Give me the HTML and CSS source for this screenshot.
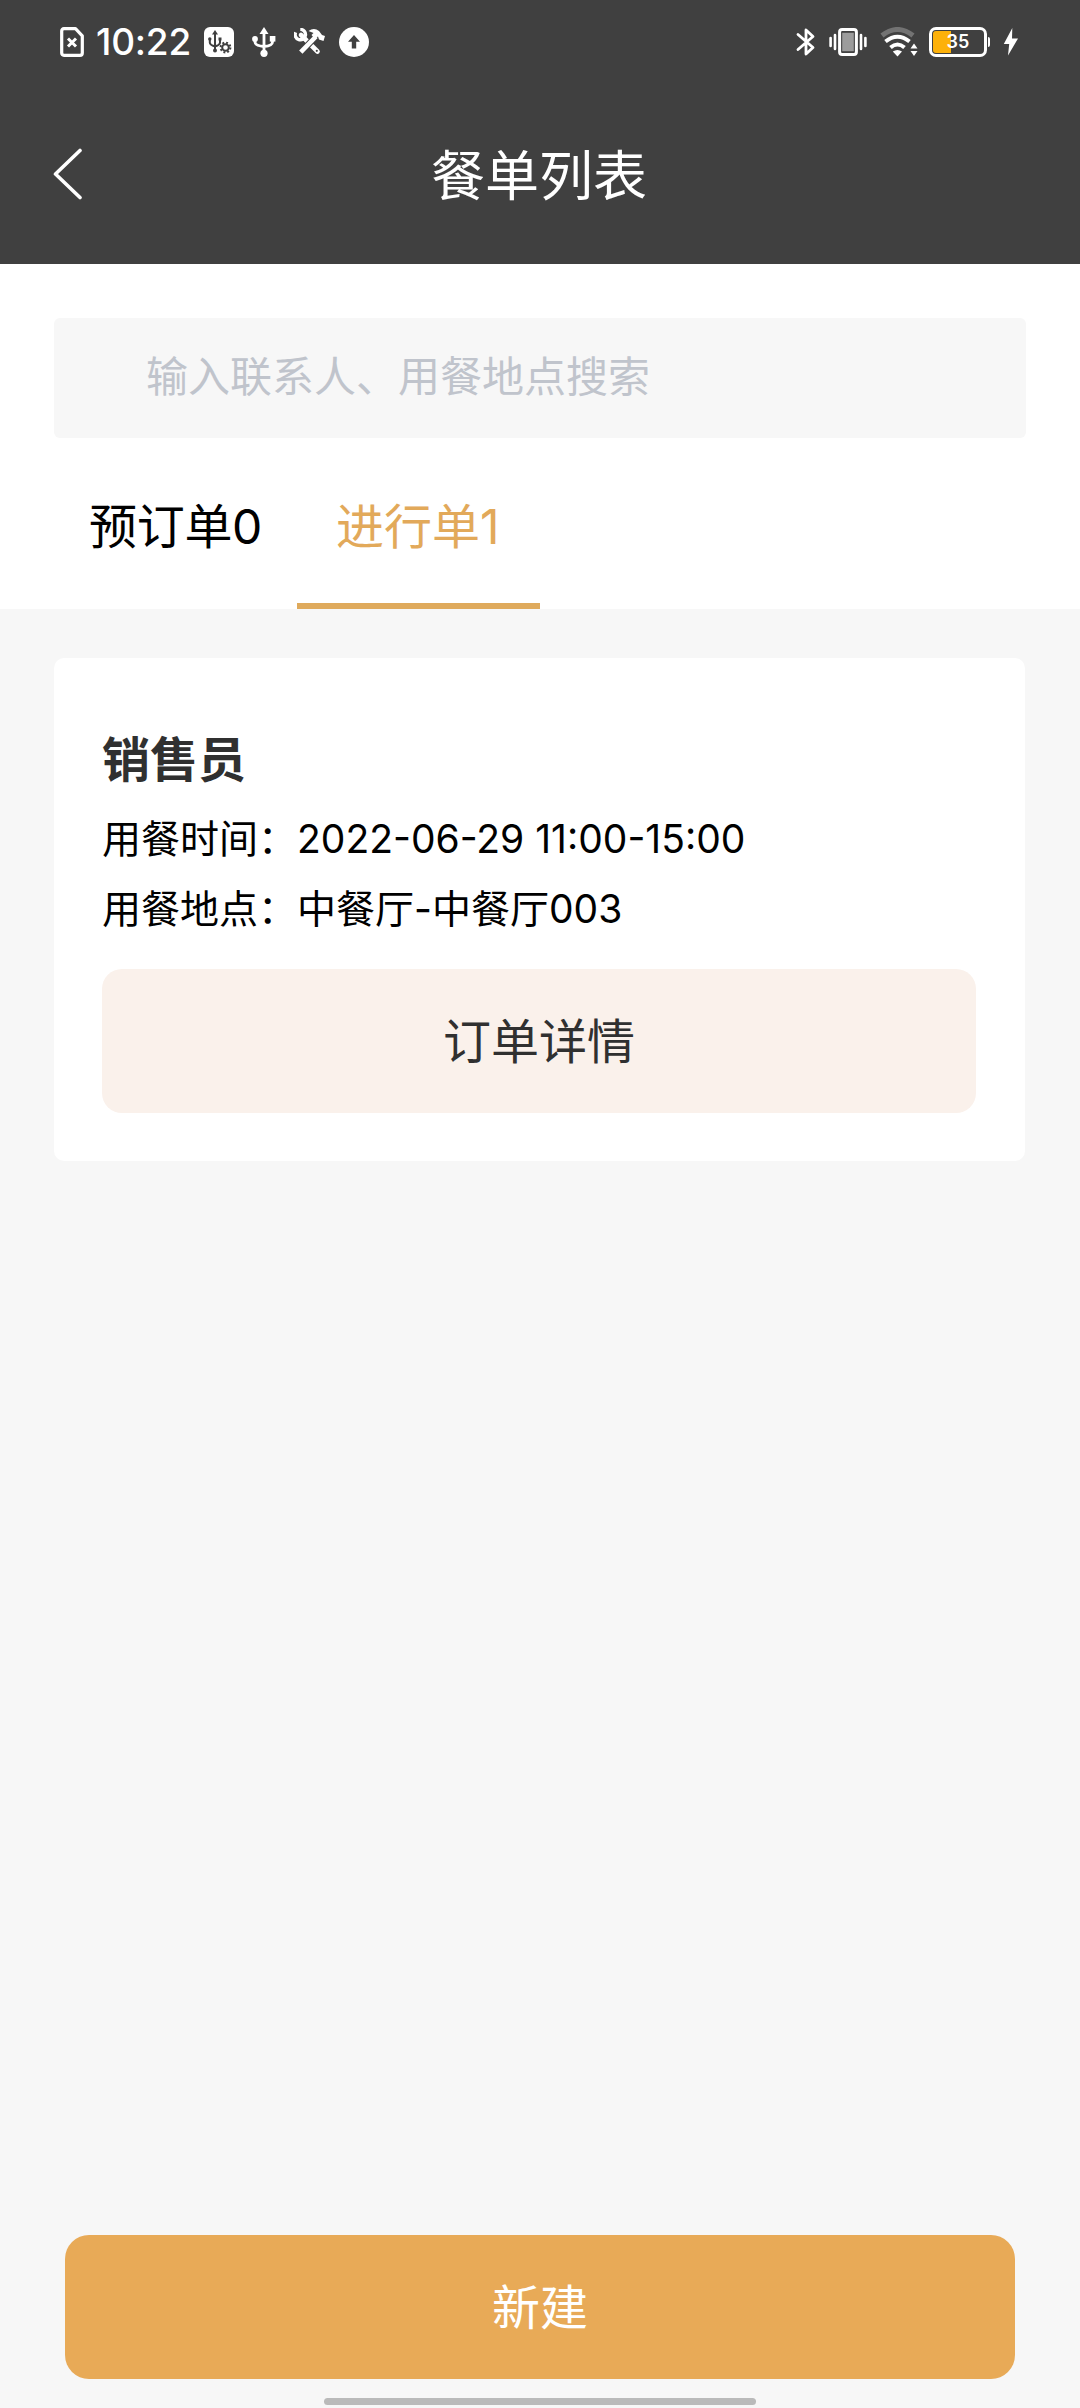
FILE: index.html
```html
<!DOCTYPE html>
<html lang="zh-CN">
<head>
  <meta charset="UTF-8" />
  <meta name="viewport" content="width=device-width, initial-scale=1.0" />
  <title>餐单列表</title>
  <link rel="stylesheet" href="styles.css">
</head>
<body>
  <header>
    <div class="status-bar">
      <div class="status-left">
        <svg class="icon-sim" width="24" height="30" viewBox="0 0 24 30" fill="none" stroke="#fff">
          <path d="M4 1.7H15.5L22.3 8.8V26Q22.3 28.3 20 28.3H4Q1.7 28.3 1.7 26V4Q1.7 1.7 4 1.7Z" stroke-width="3.2" stroke-linejoin="round"/>
          <path d="M8 11.5L16 19.5M16 11.5L8 19.5" stroke-width="3"/>
        </svg>
        <span class="time">10:22</span>
        <svg class="icon-debug" width="30" height="30" viewBox="0 0 30 30">
          <rect width="30" height="30" rx="6" fill="#fff"/>
          <g fill="none" stroke="#404040" stroke-width="2">
            <path d="M11 6V23M5.8 12V15.5Q5.8 18 11 19.5Q16 18 16 15.5V12"/>
            <circle cx="21.5" cy="20.5" r="3.3"/>
            <circle cx="21.5" cy="20.5" r="4.9" stroke-dasharray="1.9 1.95"/>
          </g>
          <path d="M8 7.5L11 3L14 7.5Z" fill="#404040"/>
          <rect x="14.5" y="10.5" width="3" height="3" fill="#404040"/>
          <circle cx="5.8" cy="12" r="1.7" fill="#404040"/>
          <circle cx="11" cy="23.5" r="2" fill="#404040"/>
        </svg>
        <svg class="icon-usb" width="24" height="30" viewBox="0 0 24 30" fill="#fff">
          <path d="M7.5 7L12 0L16.5 7Z"/>
          <path d="M12 5V26M3 12V15Q3 18.8 12 19.5Q20.5 18.8 20.5 15V11" fill="none" stroke="#fff" stroke-width="2.8"/>
          <circle cx="3" cy="12" r="2.9"/>
          <rect x="17.8" y="9" width="5.6" height="5.6"/>
          <circle cx="12" cy="26.3" r="3.6"/>
        </svg>
        <svg class="icon-tools" width="32" height="28" viewBox="0 0 32 28">
          <g fill="none" stroke="#fff">
            <path d="M7 7L23.5 23.5" stroke-width="4.6" stroke-linecap="round"/>
            <path d="M1.6 4.4A5.2 5.2 0 1 0 6.3 1.4" stroke-width="3.4"/>
            <path d="M9.5 21.5L20 10.5" stroke="#404040" stroke-width="6.6"/>
            <path d="M6.8 24.2L22 8.5" stroke-width="4.6"/>
          </g>
          <path d="M14.5 3Q20 -1 25 3L28 7L31 8L29.5 13L25 11.5L24 8.5L20.5 10.5L17.5 7L19.5 5Z" fill="#fff"/>
          <circle cx="22.8" cy="22.8" r="1.1" fill="#404040"/>
        </svg>
        <svg class="icon-upload" width="30" height="30" viewBox="0 0 30 30">
          <circle cx="15" cy="15" r="15" fill="#fff"/>
          <path d="M15 8L21 14.8H17.2V21.5H12.8V14.8H9Z" fill="#404040"/>
        </svg>
      </div>
      <div class="status-right">
        <svg class="icon-bluetooth" width="20" height="30" viewBox="0 0 20 30" fill="none" stroke="#fff" stroke-width="2.8" stroke-linejoin="round" stroke-linecap="round">
          <path d="M2 7.5L17 20.5L10 27V3L17 9.5L2 22.5"/>
        </svg>
        <svg class="icon-vibrate" width="38" height="30" viewBox="0 0 38 30">
          <rect x="10.6" y="2.6" width="16.8" height="24.8" rx="2.5" fill="#404040" stroke="#fff" stroke-width="3"/>
          <rect x="13.2" y="5.8" width="11.6" height="18.4" fill="#9c9c9c"/>
          <path d="M6 8V22M32 8V22M1.6 11V19M36.4 11V19" stroke="#fff" stroke-width="2.6" stroke-linecap="round"/>
        </svg>
        <svg class="icon-wifi" width="38" height="30" viewBox="0 0 38 30" fill="none">
          <path d="M2 8.5Q17.5 -3.5 33 8.5" stroke="#737373" stroke-width="5"/>
          <path d="M5.5 14.5Q17.5 5 29.5 14.5M10.5 20.5Q17.5 14.5 24.5 20.5" stroke="#fff" stroke-width="4"/>
          <path d="M12.8 24.5Q17.5 21.5 22 24.5L17.5 29.5Z" fill="#fff"/>
          <path d="M30.5 21.5L34 16.5L37.5 21.5ZM30.5 24L34 29L37.5 24Z" fill="#fff"/>
        </svg>
        <div class="battery">
          <span class="battery-level"></span>
          <span class="battery-text">35</span>
        </div>
        <svg class="icon-bolt" width="16" height="28" viewBox="0 0 16 28" fill="#fff">
          <path d="M9.3 0L0.8 16H6.2L5 27.5L15 10.5H9Z"/>
        </svg>
      </div>
    </div>
    <div class="nav-bar">
      <a class="back" href="#">
        <svg width="30" height="52" viewBox="0 0 30 52" fill="none" stroke="#fff" stroke-width="3.6" stroke-linecap="round" stroke-linejoin="round">
          <path d="M27 2.5L2.5 26L27 49.5"/>
        </svg>
      </a>
      <h1>餐单列表</h1>
    </div>
  </header>

  <section class="top">
    <input class="search" type="text" placeholder="输入联系人、用餐地点搜索">
    <nav class="tabs">
      <a class="tab" href="#">预订单0</a>
      <a class="tab active" href="#">进行单1</a>
    </nav>
  </section>

  <main>
    <div class="card">
      <h2>销售员</h2>
      <p>用餐时间：2022-06-29 11:00-15:00</p>
      <p>用餐地点：中餐厅-中餐厅003</p>
      <button class="detail-btn">订单详情</button>
    </div>
  </main>

  <footer>
    <button class="create-btn">新建</button>
    <div class="home-bar"></div>
  </footer>
</body>
</html>
```

FILE: styles.css
```css
* {
  margin: 0;
  padding: 0;
  box-sizing: border-box;
}
body {
  display: flex;
  flex-direction: column;
  height: 2408px;
  background: #f7f7f7;
  color: #000;
  font-family: Inter, 'Noto Sans CJK SC', sans-serif;
  overflow: hidden;
}
a {
  color: inherit;
  text-decoration: none;
}
button {
  border: none;
  font-family: inherit;
}
svg {
  display: block;
  flex: none;
}

/* header */
header {
  height: 264px;
  background: #404040;
  color: #fff;
}
.status-bar {
  display: flex;
  justify-content: space-between;
  align-items: center;
  height: 84px;
  padding: 0 61px 0 60px;
}
.status-left,
.status-right {
  display: flex;
  align-items: center;
}
.time {
  width: 97px;
  margin: 0 11px 0 12px;
  font-size: 37px;
  font-weight: 500;
  line-height: 44px;
  letter-spacing: -0.2px;
  white-space: nowrap;
}
.icon-debug {
  margin-right: 18px;
}
.icon-usb {
  margin-right: 18px;
}
.icon-tools {
  margin-right: 13px;
}
.icon-bluetooth {
  margin-right: 13px;
}
.icon-vibrate {
  margin-right: 13px;
}
.icon-wifi {
  margin-right: 11px;
}
.battery {
  position: relative;
  width: 58px;
  height: 30px;
  margin-right: 16px;
  padding: 1px;
  border: 3px solid #fff;
  border-radius: 7px;
}
.battery::after {
  content: '';
  position: absolute;
  top: 7px;
  right: -6px;
  width: 2px;
  height: 10px;
  border-radius: 0 2px 2px 0;
  background: #fff;
}
.battery-level {
  display: block;
  width: 35%;
  height: 100%;
  border-radius: 3px 0 0 3px;
  background: #fdb10a;
}
.battery-text {
  position: absolute;
  inset: 0;
  font-size: 18px;
  font-weight: 600;
  line-height: 24px;
  text-align: center;
}
.nav-bar {
  display: grid;
  grid-template-columns: 100px 1fr 100px;
  align-items: center;
  height: 180px;
}
.back {
  padding-left: 53px;
}
.nav-bar h1 {
  padding: 6px 2px 0 0;
  font-size: 54px;
  font-weight: 400;
  line-height: 80px;
  text-align: center;
}

/* search and tabs */
.top {
  height: 345px;
  padding: 54px 54px 0;
  background: #fff;
}
.search {
  display: block;
  width: 100%;
  height: 120px;
  padding: 0 92px 4px;
  border: none;
  border-radius: 6px;
  background: #f7f7f7;
  font-family: inherit;
  font-size: 42px;
}
.search::placeholder {
  color: #c0c4cc;
  opacity: 1;
}
.tabs {
  display: flex;
}
.tab {
  width: 243px;
  height: 171px;
  padding: 53px 0 0 35px;
  border-bottom: 6px solid transparent;
  font-size: 48px;
  line-height: 72px;
}
.tab:first-child {
  width: 243px;
}
.tab.active {
  padding-left: 39px;
  border-color: #dfaa5c;
  color: #e2a95a;
}
.tab:first-child:not(.active) {
  letter-spacing: -0.3px;
}

/* order card */
main {
  flex: 1;
  padding: 49px 55px 0 54px;
}
.card {
  height: 503px;
  padding: 66px 49px 0 48px;
  border-radius: 10px;
  background: #fff;
}
.card h2 {
  margin-bottom: 8px;
  color: #303030;
  font-size: 48px;
  font-weight: 700;
  line-height: 72px;
}
.card p {
  font-size: 39px;
  line-height: 70px;
}
.detail-btn {
  display: block;
  width: 100%;
  height: 144px;
  margin-top: 25px;
  padding-bottom: 6px;
  border-radius: 20px;
  background: #faf1eb;
  color: #303030;
  font-size: 48px;
}

/* bottom action */
footer {
  display: flex;
  flex-direction: column;
  align-items: center;
  height: 173px;
}
.create-btn {
  width: 950px;
  height: 144px;
  padding-bottom: 6px;
  border-radius: 24px;
  background: #e8aa57;
  color: #fff;
  font-size: 48px;
}
.home-bar {
  width: 432px;
  height: 7px;
  margin-top: 19px;
  border-radius: 4px;
  background: #bababa;
}
```
